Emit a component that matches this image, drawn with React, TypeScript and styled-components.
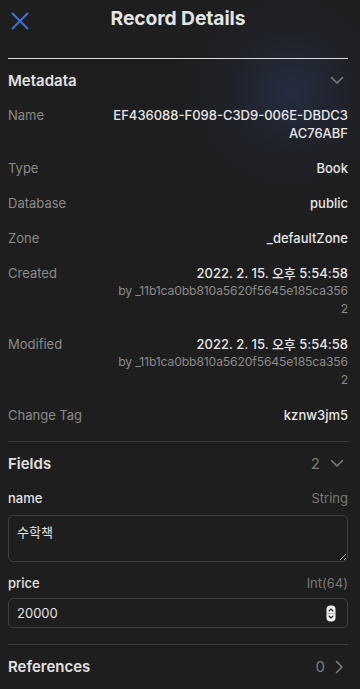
import styled, { createGlobalStyle } from 'styled-components';

const GlobalStyle = createGlobalStyle`
  html, body {
    margin: 0;
    padding: 0;
    background: #1e1e1e;
  }
  body {
    font-family: Inter, "Noto Sans CJK KR", sans-serif;
    color: #e6e6e6;
    -webkit-font-smoothing: antialiased;
  }
`;

type Meta = { label: string; value: string; sub?: string };

const META: Meta[] = [
  { label: 'Name', value: 'EF436088-F098-C3D9-006E-DBDC3AC76ABF' },
  { label: 'Type', value: 'Book' },
  { label: 'Database', value: 'public' },
  { label: 'Zone', value: '_defaultZone' },
  { label: 'Created', value: '2022. 2. 15. 오후 5:54:58', sub: 'by _11b1ca0bb810a5620f5645e185ca3562' },
  { label: 'Modified', value: '2022. 2. 15. 오후 5:54:58', sub: 'by _11b1ca0bb810a5620f5645e185ca3562' },
  { label: 'Change Tag', value: 'kznw3jm5' },
];

const ChevronDown = () => (
  <svg width="14" height="9" viewBox="0 0 14 9" fill="none">
    <path d="M1.5 1.5 L7 7 L12.5 1.5" stroke="#7c7c7c" strokeWidth="1.6" strokeLinecap="round" strokeLinejoin="round" />
  </svg>
);

const ChevronRight = () => (
  <svg width="9" height="14" viewBox="0 0 9 14" fill="none">
    <path d="M1.5 1.5 L7 7 L1.5 12.5" stroke="#7c7c7c" strokeWidth="1.6" strokeLinecap="round" strokeLinejoin="round" />
  </svg>
);

const CloseIcon = () => (
  <svg width="18" height="18" viewBox="0 0 18 18" fill="none">
    <path d="M1.5 1.5 L16.5 16.5 M16.5 1.5 L1.5 16.5" stroke="#3f6fd8" strokeWidth="2" strokeLinecap="round" />
  </svg>
);

const Spinner = () => (
  <svg width="10" height="17" viewBox="0 0 10 17" fill="none">
    <rect x="0.5" y="0.5" width="9" height="16" rx="4" fill="#f2f2f2" />
    <line x1="1.5" y1="8.5" x2="8.5" y2="8.5" stroke="#9a9a9a" strokeWidth="0.8" />
    <path d="M3 6 L5 4 L7 6" stroke="#222" strokeWidth="1.1" strokeLinecap="round" strokeLinejoin="round" />
    <path d="M3 11 L5 13 L7 11" stroke="#222" strokeWidth="1.1" strokeLinecap="round" strokeLinejoin="round" />
  </svg>
);

export default function App() {
  return (
    <>
      <GlobalStyle />
      <Page>
        <Header>
          <CloseButton>
            <CloseIcon />
          </CloseButton>
          <Title>Record Details</Title>
        </Header>
        <HeaderRule />

        <SectionHead $height={42}>
          <h3>Metadata</h3>
          <Trailing>
            <ChevronDown />
          </Trailing>
        </SectionHead>

        <MetaList>
          {META.map((m) => (
            <MetaRow key={m.label}>
              <MetaLabel>{m.label}</MetaLabel>
              <MetaValue>
                {m.value}
                {m.sub && <SubText>{m.sub}</SubText>}
              </MetaValue>
            </MetaRow>
          ))}
        </MetaList>

        <Divider />

        <SectionHead $height={43}>
          <h3>Fields</h3>
          <Trailing>
            <span>2</span>
            <ChevronDown />
          </Trailing>
        </SectionHead>

        <FieldHead $gap={3}>
          <span>name</span>
          <FieldType>String</FieldType>
        </FieldHead>
        <TextArea defaultValue="수학책" />

        <FieldHead $gap={11}>
          <span>price</span>
          <FieldType>Int(64)</FieldType>
        </FieldHead>
        <NumberBox>
          <input defaultValue="20000" />
          <Spinner />
        </NumberBox>

        <Divider $top={16} />

        <SectionHead $height={43}>
          <h3>References</h3>
          <Trailing>
            <span>0</span>
            <ChevronRight />
          </Trailing>
        </SectionHead>
      </Page>
    </>
  );
}

const Page = styled.div`
  width: 360px;
  min-height: 689px;
  box-sizing: border-box;
  padding: 0 12px 0 8px;
  background:
    radial-gradient(circle at 290px 92px, rgba(46, 64, 112, 0.42) 0, rgba(36, 48, 82, 0.2) 60px, rgba(30, 30, 30, 0) 115px),
    #1e1e1e;
  overflow: hidden;
`;

const Header = styled.div`
  position: relative;
  height: 36px;
  display: flex;
  align-items: center;
  justify-content: center;
`;

const CloseButton = styled.button`
  position: absolute;
  left: 3px;
  top: 12px;
  background: none;
  border: 0;
  padding: 0;
  display: flex;
`;

const Title = styled.h1`
  margin: 0;
  font-size: 19.3px;
  font-weight: 700;
  color: #e4e4e4;
  letter-spacing: -0.1px;
`;

const HeaderRule = styled.div`
  margin-top: 22px;
  height: 1px;
  background: #d9d9d9;
`;

const SectionHead = styled.div<{ $height?: number }>`
  height: ${(p) => p.$height ?? 44}px;
  display: flex;
  align-items: center;
  justify-content: space-between;

  h3 {
    margin: 0;
    font-size: 15px;
    font-weight: 600;
    color: #e2e2e2;
  }
`;

const Trailing = styled.div`
  display: flex;
  align-items: center;
  gap: 10px;
  padding-right: 4px;
  color: #7c7c7c;
  font-size: 15px;
`;

const MetaList = styled.div`
  display: flex;
  flex-direction: column;
  padding-top: 5px;
`;

const MetaRow = styled.div`
  display: grid;
  grid-template-columns: 104px 1fr;
  font-size: 13px;
  line-height: 18px;
  padding-bottom: 17px;
`;

const MetaLabel = styled.div`
  color: #8a8a8a;
`;

const MetaValue = styled.div`
  text-align: right;
  color: #e6e6e6;
  word-break: break-all;
  font-weight: 500;
`;

const SubText = styled.div`
  color: #8a8a8a;
  font-weight: 400;
  font-size: 12.2px;
  letter-spacing: -0.15px;
`;

const Divider = styled.div<{ $top?: number }>`
  margin-top: ${(p) => p.$top ?? 0}px;
  height: 1px;
  background: #3a3a3a;
`;

const FieldHead = styled.div<{ $gap?: number }>`
  margin-top: ${(p) => p.$gap ?? 0}px;
  display: flex;
  justify-content: space-between;
  align-items: center;
  height: 20px;
  font-size: 13px;
  font-weight: 500;
  color: #e2e2e2;
`;

const FieldType = styled.span`
  color: #7a7a7a;
  font-weight: 400;
`;

const TextArea = styled.textarea`
  display: block;
  box-sizing: border-box;
  margin-top: 7px;
  width: 340px;
  height: 47px;
  background: #1e1e1e;
  border: 1px solid #404040;
  border-radius: 5px;
  padding: 6px 8px;
  color: #e2e2e2;
  font-family: Inter, "Noto Sans CJK KR", sans-serif;
  font-size: 13px;
  outline: none;
`;

const NumberBox = styled.div`
  margin-top: 5px;
  width: 340px;
  height: 30px;
  box-sizing: border-box;
  border: 1px solid #404040;
  border-radius: 5px;
  display: flex;
  align-items: center;
  padding: 0 11px 0 8px;

  input {
    flex: 1;
    background: transparent;
    border: 0;
    outline: none;
    color: #e2e2e2;
    font-family: Inter, sans-serif;
    font-size: 13px;
    padding: 0;
  }
`;
